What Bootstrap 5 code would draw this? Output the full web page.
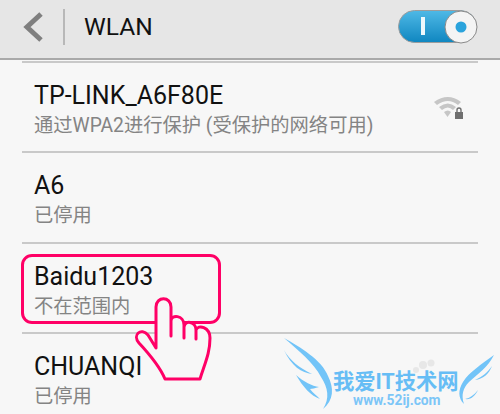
<!DOCTYPE html>
<html lang="en">
<head>
    <meta charset="UTF-8">
    <title>WLAN</title>
    <link rel="stylesheet" href="https://cdn.jsdelivr.net/npm/bootstrap@5.3.0/dist/css/bootstrap.min.css">
    <style>
        html, body { width: 500px; height: 414px; overflow: hidden; }
        body { background: #f7f7f7; font-family: Roboto, "Noto Sans CJK SC", sans-serif; position: relative; }
        .wl-head { height: 60px; background: #e6e6e6; border-bottom: 2px solid #a9a9a9; padding: 0 22px 4px; }
        .wl-sep { width: 2px; height: 36px; background: #b8b8b8; margin-left: 19px; margin-right: 19px; }
        .wl-title { font-size: 24.5px; color: #111; line-height: 1; }
        .wl-list { padding: 1px 22px 0; }
        .wl-item { height: 90.3px; border-top: 2px solid #c9c9c9; padding: 18px 0 0 12px; }
        .wl-name { font-size: 25px; line-height: 30px; color: #111; }
        .wl-sub { font-size: 19.3px; line-height: 26px; color: #848484; margin-top: 2px; }
        .wl-wifi { margin-top: 15px; margin-right: 13px; }
        .wl-box { position: absolute; left: 21px; top: 254px; width: 200px; height: 70px; border: 3px solid #ff0066; border-radius: 11px; }
        .wl-hand { position: absolute; left: 130px; top: 291px; }
        .wl-mark { position: absolute; left: 270px; top: 330px; width: 230px; height: 84px; }
        .wl-mark-a { position: absolute; left: 63px; top: 41px; font-size: 21.3px; font-weight: 700; line-height: 22px; color: #66bdf5; white-space: nowrap; }
        .wl-mark-b { position: absolute; left: 83px; top: 63px; font-size: 13.8px; font-weight: 700; line-height: 14px; color: #7cc6f7; white-space: nowrap; }
    </style>
</head>
<body>
    <div class="wl-head d-flex align-items-center">
        <svg width="22" height="30" viewBox="0 0 22 30"><path d="M19 2 L5 15 L19 28" fill="none" stroke="#7f7f7f" stroke-width="5"/></svg>
        <div class="wl-sep"></div>
        <div class="wl-title flex-grow-1">WLAN</div>
        <svg width="80" height="34" viewBox="0 0 80 34">
            <defs>
                <linearGradient id="pill" x1="0" y1="0" x2="0" y2="1">
                    <stop offset="0" stop-color="#4fb9e6"/>
                    <stop offset="1" stop-color="#0f86c0"/>
                </linearGradient>
            </defs>
            <rect x="0.5" y="0.5" width="78" height="32" rx="16" fill="url(#pill)" stroke="#9c9c9c"/>
            <rect x="23" y="7" width="4" height="18" fill="#eef8fc"/>
            <circle cx="63" cy="17" r="16" fill="#f4f4f4" stroke="#8a8a8a"/>
            <circle cx="63" cy="17" r="5.5" fill="#2aa3dc"/>
        </svg>
    </div>

    <div class="wl-list">
        <div class="wl-item d-flex justify-content-between">
            <div>
                <div class="wl-name">TP-LINK_A6F80E</div>
                <div class="wl-sub">通过WPA2进行保护 (受保护的网络可用)</div>
            </div>
            <svg class="wl-wifi" width="32" height="26" viewBox="0 0 32 26">
                <path d="M1 6 Q15 -4 28 6 L25 9 Q15 1 4 9 Z" fill="#c6c6c6"/>
                <path d="M6 11 Q15 4 23 11 L20 14 Q15 9 9 14 Z" fill="#c6c6c6"/>
                <path d="M11 16 Q15 13 18 16 L14.5 21 Z" fill="#c6c6c6"/>
                <rect x="22" y="16" width="8" height="7" fill="#6f6f6f"/>
                <path d="M24 16 V14 a2 2 0 0 1 4 0 V16" fill="none" stroke="#6f6f6f" stroke-width="1.4"/>
            </svg>
        </div>
        <div class="wl-item">
            <div class="wl-name">A6</div>
            <div class="wl-sub">已停用</div>
        </div>
        <div class="wl-item">
            <div class="wl-name">Baidu1203</div>
            <div class="wl-sub">不在范围内</div>
        </div>
        <div class="wl-item">
            <div class="wl-name">CHUANQI</div>
            <div class="wl-sub">已停用</div>
        </div>
    </div>

    <div class="wl-box"></div>

    <svg class="wl-hand" width="85" height="100" viewBox="0 0 85 100">
        <path d="M26 57 V16 C26 5 41 5 41 16 V45 V30 C41 23 54 24 54 34 V47 V36 C55 28 66 31 66 39 V48 V39 C68 33 80 36 80 47 C80 62 75 72 70 88 H35 C30 76 22 66 9 52 C2 44 11 36 18 44 Z" fill="#f7f7f7" stroke="#ff0066" stroke-width="3" stroke-linejoin="round"/>
    </svg>

    <div class="wl-mark">
        <svg class="position-absolute top-0 start-0" width="230" height="84" viewBox="0 0 230 84">
            <g fill="#72c4f8">
                <path d="M14 8 C30 17 52 30 58 46 C64 58 64 70 53 79 C60 68 58 58 51 47 C44 33 28 20 14 8 Z"/>
                <path d="M14 20 C20 31 30 38 42 44 C32 43 21 36 14 20 Z"/>
                <path d="M26 45 C34 52 42 56 49 57 C45 58 42 59 40 59 C43 63 46 65 50 69 C41 66 33 57 26 45 Z"/>
                <path d="M224 25 C212 34 199 42 193 52 C188 60 188 68 194 74 C191 65 193 58 199 52 C208 44 218 37 224 25 Z"/>
                <path d="M222 36 C217 43 212 47 205 50 C213 49 219 44 222 36 Z"/>
                <path d="M208 60 C204 65 200 68 195 69 C201 70 205 66 208 60 Z"/>
            </g>
            <g fill="#e7e7e7">
                <circle cx="153" cy="35" r="4"/><circle cx="161" cy="33" r="3.5"/><circle cx="146" cy="40" r="3"/>
            </g>
        </svg>
        <div class="wl-mark-a">我爱IT技术网</div>
        <div class="wl-mark-b">www.52ij.com</div>
    </div>
</body>
</html>
